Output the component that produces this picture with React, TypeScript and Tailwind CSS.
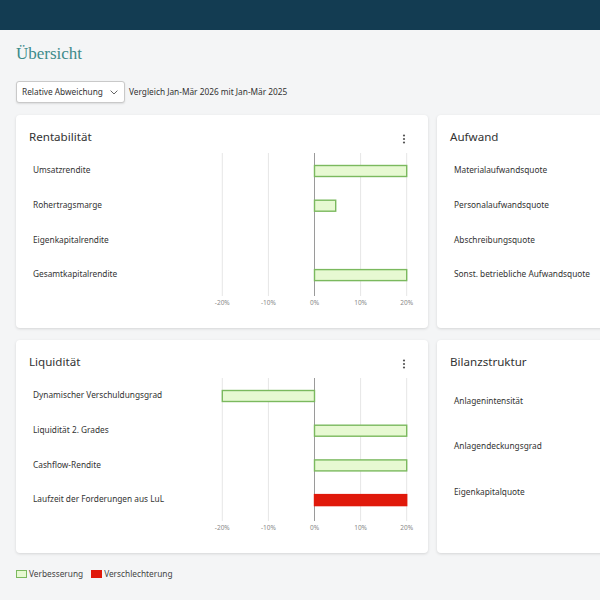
import { ReactNode } from "react";

type Row = { label: string; value: number; worse?: boolean };

const rentabilitaet: Row[] = [
  { label: "Umsatzrendite", value: 20 },
  { label: "Rohertragsmarge", value: 4.6 },
  { label: "Eigenkapitalrendite", value: 0 },
  { label: "Gesamtkapitalrendite", value: 20 },
];

const liquiditaet: Row[] = [
  { label: "Dynamischer Verschuldungsgrad", value: -20 },
  { label: "Liquidität 2. Grades", value: 20 },
  { label: "Cashflow-Rendite", value: 20 },
  { label: "Laufzeit der Forderungen aus LuL", value: 20, worse: true },
];

const ticks = [-20, -10, 0, 10, 20];
const px = (v: number) => 10.3 + ((v + 20) / 40) * 184.4;

function Kebab() {
  return (
    <svg width="8" height="10" viewBox="0 0 8 10" className="mt-[6px]">
      <circle cx="4" cy="1.5" r="1.1" fill="#555" />
      <circle cx="4" cy="5" r="1.1" fill="#555" />
      <circle cx="4" cy="8.5" r="1.1" fill="#555" />
    </svg>
  );
}

function Card({ title, menu, children }: { title: string; menu?: boolean; children: ReactNode }) {
  return (
    <div className="w-[412px] h-[213px] shrink-0 bg-white rounded-[4px] shadow-[0_1px_3px_rgba(0,0,0,0.13)] pt-[13px] pl-[13px]">
      <div className="h-[18px] flex flex-row items-start justify-between pr-[20px]">
        <div className="text-[11.6px] leading-[18px] text-[#333]">{title}</div>
        {menu && <Kebab />}
      </div>
      <div className="mt-[7px]">{children}</div>
    </div>
  );
}

function Chart({ rows }: { rows: Row[] }) {
  return (
    <div className="flex flex-row">
      <div className="w-[183px] pl-[4px] flex flex-col">
        {rows.map((r) => (
          <div key={r.label} className="h-[34.7px] flex items-center text-[8.3px] text-[#333]">
            {r.label}
          </div>
        ))}
      </div>
      <svg width="208" height="158" viewBox="0 0 208 158">
        {ticks.map((t) => (
          <line
            key={t}
            x1={px(t)}
            x2={px(t)}
            y1={0}
            y2={143}
            stroke={t === 0 ? "#9a9a9a" : "#e6e6e6"}
            strokeWidth={1}
          />
        ))}
        {rows.map((r, i) => {
          if (r.value === 0) return null;
          const c = 18 + i * 34.7;
          const x0 = Math.min(px(0), px(r.value));
          const w = Math.abs(px(r.value) - px(0));
          return (
            <rect
              key={r.label}
              x={x0}
              y={c - 5.5}
              width={w}
              height={11}
              fill={r.worse ? "#e0190b" : "#e7f9d2"}
              stroke={r.worse ? "#e0190b" : "#7bb95e"}
              strokeWidth={1.4}
            />
          );
        })}
        {ticks.map((t) => (
          <text
            key={t}
            x={px(t)}
            y={152}
            textAnchor="middle"
            fontSize="6.5"
            fill="#8a8a8a"
            fontFamily="'Noto Sans', sans-serif"
          >
            {t}%
          </text>
        ))}
      </svg>
    </div>
  );
}

function Labels({ items, rowH, offset }: { items: string[]; rowH: string; offset: string }) {
  return (
    <div className={`flex flex-col pl-[4px] ${offset}`}>
      {items.map((l) => (
        <div key={l} className={`${rowH} flex items-center text-[8.3px] text-[#333]`}>
          {l}
        </div>
      ))}
    </div>
  );
}

export default function App() {
  return (
    <div className="w-full h-[600px] overflow-hidden bg-[#f4f5f6] font-['Noto_Sans',sans-serif]">
      <div className="h-[30px] bg-[#133c52]" />
      <div className="px-4 pt-[12px]">
        <div className="font-['Liberation_Serif',serif] text-[17px] leading-[24px] text-[#3d8b8a]">
          Übersicht
        </div>
        <div className="mt-[15px] flex flex-row items-center gap-[4px]">
          <div className="h-[22px] w-[109px] bg-white border border-[#c9c9c9] rounded-[3px] shadow-[0_1px_2px_rgba(0,0,0,0.1)] flex flex-row items-center justify-between pl-[5px] pr-[6px] text-[8.3px] text-[#333]">
            <span>Relative Abweichung</span>
            <svg width="8" height="5" viewBox="0 0 8 5">
              <path d="M0.6 0.6 L4 4 L7.4 0.6" fill="none" stroke="#555" strokeWidth="0.9" />
            </svg>
          </div>
          <div className="text-[8.3px] text-[#333]">Vergleich Jan-Mär 2026 mit Jan-Mär 2025</div>
        </div>
        <div className="mt-[12px] flex flex-col gap-[12px]">
          <div className="flex flex-row gap-[9px]">
            <Card title="Rentabilität" menu>
              <Chart rows={rentabilitaet} />
            </Card>
            <Card title="Aufwand">
              <Labels
                rowH="h-[34.7px]"
                offset="mt-0"
                items={[
                  "Materialaufwandsquote",
                  "Personalaufwandsquote",
                  "Abschreibungsquote",
                  "Sonst. betriebliche Aufwandsquote",
                ]}
              />
            </Card>
          </div>
          <div className="flex flex-row gap-[9px]">
            <Card title="Liquidität" menu>
              <Chart rows={liquiditaet} />
            </Card>
            <Card title="Bilanzstruktur">
              <Labels
                rowH="h-[45.5px]"
                offset="mt-[2px]"
                items={["Anlagenintensität", "Anlagendeckungsgrad", "Eigenkapitalquote"]}
              />
            </Card>
          </div>
        </div>
        <div className="mt-[15px] flex flex-row items-center text-[8.3px] text-[#444]">
          <div className="w-[11px] h-[8px] bg-[#e7f9d2] border border-[#7bb95e]" />
          <span className="ml-[2px]">Verbesserung</span>
          <div className="ml-[8px] w-[11px] h-[8px] bg-[#e0190b]" />
          <span className="ml-[2px]">Verschlechterung</span>
        </div>
      </div>
    </div>
  );
}
